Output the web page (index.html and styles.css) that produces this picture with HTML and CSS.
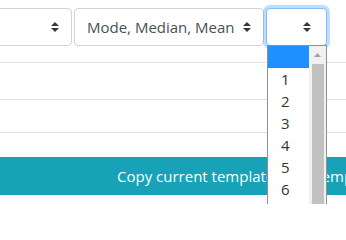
FILE: index.html
```html
<!DOCTYPE html>
<html>
<head>
<meta charset="utf-8">
<link rel="stylesheet" href="styles.css">
</head>
<body>
<div class="page">
  <div class="filters">
    <div class="select s1"><span class="val"></span><svg class="caret" viewBox="0 0 4 5" width="8" height="10"><path d="M2 0L0 2h4zm0 5L0 3h4z"/></svg></div>
    <div class="select s2"><span class="val">Mode, Median, Mean</span><svg class="caret" viewBox="0 0 4 5" width="8" height="10"><path d="M2 0L0 2h4zm0 5L0 3h4z"/></svg></div>
    <div class="select s3 focused"><span class="val"></span><svg class="caret" viewBox="0 0 4 5" width="8" height="10"><path d="M2 0L0 2h4zm0 5L0 3h4z"/></svg></div>
  </div>
  <div class="row r1"></div>
  <div class="row r2"></div>
  <div class="row r3"></div>
  <div class="actions"><button class="btn-info">Copy current template to all templates</button></div>
</div>
<div class="dropdown">
  <div class="opts">
    <div class="opt sel"></div>
    <div class="opt">1</div>
    <div class="opt">2</div>
    <div class="opt">3</div>
    <div class="opt">4</div>
    <div class="opt">5</div>
    <div class="opt">6</div>
  </div>
  <div class="sb">
    <div class="sb-up"><svg viewBox="0 0 7 4" width="7" height="4"><path d="M3.5 0L7 4H0z"/></svg></div>
    <div class="sb-thumb"></div>
  </div>
</div>
</body>
</html>
```

FILE: styles.css
```css
html, body {
  margin: 0;
  padding: 0;
  background: #fff;
  overflow: hidden;
  width: 346px;
  height: 204px;
}
body {
  font-family: "Open Sans", "Liberation Sans", sans-serif;
  position: relative;
}
.page {
  margin-left: -78px;
  width: 700px;
}
.filters {
  display: flex;
  gap: 2px;
  padding: 8px 0 16px;
}
.select {
  box-sizing: border-box;
  height: 38px;
  border: 1px solid #ced4da;
  border-radius: 4px;
  display: flex;
  align-items: center;
  padding: 0 12px;
  color: #495057;
  font-size: 15px;
  background: #fff;
}
.select .val {
  flex: 1;
  white-space: nowrap;
}
.caret {
  fill: #343a40;
  flex: none;
}
.s1 { width: 150px; }
.s2 { width: 190px; }
.s3 { width: 61px; }
.focused {
  border-color: #80bdff;
  box-shadow: 0 0 0 3px rgba(0, 123, 255, 0.25);
  padding-right: 15px;
}
.row {
  border-top: 1px solid #dee2e6;
  box-sizing: border-box;
}
.r1 { height: 37px; }
.r2 { height: 33px; }
.r3 { height: 25px; }
.actions {
  display: flex;
}
.btn-info {
  width: 100%;
  height: 38px;
  border: 0;
  background: #17a2b8;
  color: #fff;
  font-family: "Open Sans", "Liberation Sans", sans-serif;
  font-size: 15px;
  text-align: left;
  padding: 0 0 0 195px;
  margin: 0;
  white-space: nowrap;
}
.dropdown {
  position: absolute;
  left: 267px;
  top: 45px;
  width: 60px;
  height: 159px;
  box-sizing: border-box;
  border: 1px solid #8f8f8f;
  border-bottom: 0;
  background: #fff;
  display: flex;
  overflow: hidden;
}
.opts {
  flex: 1;
}
.opt {
  height: 22px;
  line-height: 22px;
  padding-left: 13px;
  font-size: 15px;
  color: #333;
}
.opt.sel {
  background: #1e90ff;
}
.sb {
  width: 17px;
  background: #f1f1f1;
  display: flex;
  flex-direction: column;
}
.sb-up {
  height: 18px;
  display: flex;
  align-items: center;
  justify-content: center;
}
.sb-up svg {
  fill: #a3a3a3;
}
.sb-thumb {
  flex: 1;
  margin: 0 2px 0 3px;
  background: #c1c1c1;
}
```
